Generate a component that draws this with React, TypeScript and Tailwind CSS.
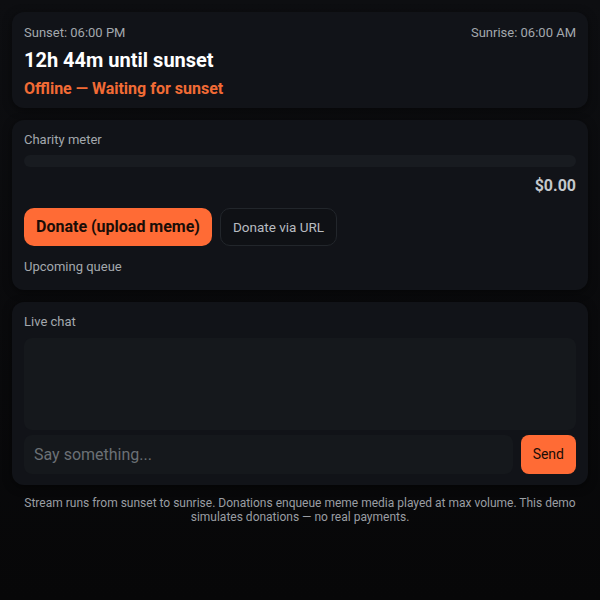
import * as React from "react";

export default function App() {
  return (
    <div
      className="min-h-[600px] bg-gradient-to-b from-[#0d0e11] to-[#070708] px-3 pt-3 pb-6 text-[#e6e8ea]"
      style={{ fontFamily: "Roboto, 'Noto Sans', sans-serif" }}
    >
      <div className="flex flex-col gap-3">
        {/* schedule */}
        <section className="rounded-xl bg-[#111318] px-3 pt-[11px] pb-[7px] shadow-[0_2px_8px_rgba(0,0,0,0.5)]">
          <div className="flex justify-between text-[13px] leading-5 text-[#a3a8ad]">
            <span>Sunset: 06:00 PM</span>
            <span>Sunrise: 06:00 AM</span>
          </div>
          <h1 className="mt-[3px] text-[20px] font-bold leading-7 text-white">12h 44m until sunset</h1>
          <p className="mt-[3px] text-[16px] font-bold leading-6 text-[#f26b35]">Offline — Waiting for sunset</p>
        </section>

        {/* charity */}
        <section className="rounded-xl bg-[#111318] px-3 pt-[10px] pb-[13px] shadow-[0_2px_8px_rgba(0,0,0,0.5)]">
          <div className="text-[13px] leading-5 text-[#a3a8ad]">Charity meter</div>
          <div className="mt-[5px] h-3 w-full rounded-full bg-[#181b20]" />
          <div className="mt-[7px] text-right text-[16px] font-bold leading-6 text-[#c4c8cc]">$0.00</div>
          <div className="mt-[10px] flex gap-2">
            <button className="h-[38px] rounded-[10px] bg-[#ff6b35] px-3 text-[16px] font-bold text-[#1a0d07]">
              Donate (upload meme)
            </button>
            <button className="h-[38px] rounded-[10px] border border-[#22262b] bg-[#0f1115] px-3 text-[13.5px] text-[#b8bcc0]">
              Donate via URL
            </button>
          </div>
          <div className="mt-[11px] text-[13px] leading-5 text-[#a3a8ad]">Upcoming queue</div>
        </section>

        {/* chat */}
        <section className="rounded-xl bg-[#111318] px-3 pt-[10px] pb-[11px] shadow-[0_2px_8px_rgba(0,0,0,0.5)]">
          <div className="text-[13px] leading-5 text-[#a3a8ad]">Live chat</div>
          <div className="mt-[6px] h-[92px] rounded-lg bg-[#15181c]" />
          <div className="mt-[5px] flex gap-2">
            <input
              placeholder="Say something..."
              className="h-[39px] flex-1 rounded-lg bg-[#15181c] px-[10px] text-[16px] text-white outline-none placeholder:text-[#6b7075]"
            />
            <button className="h-[39px] rounded-lg bg-[#ff6b35] px-3 text-[14px] text-[#1a0d07]">Send</button>
          </div>
        </section>
      </div>

      <p className="mx-auto mt-[11px] max-w-[560px] text-center text-[12px] leading-[14px] text-[#9a9ea3]">
        Stream runs from sunset to sunrise. Donations enqueue meme media played at max volume. This demo simulates donations — no real payments.
      </p>
    </div>
  );
}
